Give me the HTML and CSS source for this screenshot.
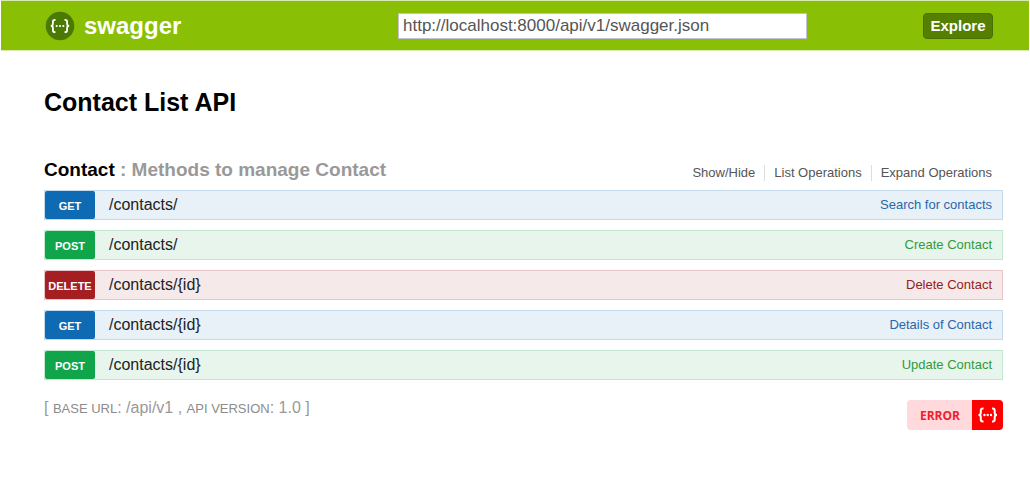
FILE: index.html
```html
<!DOCTYPE html>
<html lang="en">
<head>
<meta charset="utf-8">
<title>Swagger UI</title>
<link rel="stylesheet" href="styles.css">
</head>
<body>
<header class="header">
  <a class="logo" href="#">
    <svg class="logo-mark" viewBox="0 0 30 30" aria-hidden="true">
      <circle cx="15" cy="15" r="14.3" fill="#4b7a04"/>
      <g fill="none" stroke="#fff" stroke-width="1.8">
        <path d="M10.500 8.800h-.7c-1.400 0-1.900.6-1.900 1.900v2.100c0 1.300-.6 2.100-2.100 2.100 1.500 0 2.100.8 2.100 2.100v2.200c0 1.300.5 1.900 1.900 1.900h.7"/>
        <path d="M19.500 8.800h.7c1.400 0 1.900.6 1.900 1.900v2.100c0 1.300.6 2.100 2.100 2.100-1.500 0-2.100.8-2.100 2.100v2.200c0 1.300-.5 1.900-1.900 1.900h-.7"/>
      </g>
      <g fill="#fff"><circle cx="11.700" cy="15" r="1.100"/><circle cx="15" cy="15" r="1.100"/><circle cx="18.300" cy="15" r="1.100"/></g>
    </svg>
    <span>swagger</span>
  </a>
  <form class="explore-form">
    <input class="url" type="text" aria-label="Specification URL" value="http://localhost:8000/api/v1/swagger.json">
    <button class="explore" type="button">Explore</button>
  </form>
</header>
<main class="content">
  <h1 class="title">Contact List API</h1>
  <section>
    <div class="resource-head">
      <h2 class="resource"><a href="#">Contact</a> : Methods to manage Contact</h2>
      <ul class="options">
        <li><a href="#">Show/Hide</a></li>
        <li><a href="#">List Operations</a></li>
        <li><a href="#">Expand Operations</a></li>
      </ul>
    </div>
    <ul class="operations">
      <li class="operation get"><a class="method" href="#">GET</a><a class="path" href="#">/contacts/</a><a class="summary" href="#">Search for contacts</a></li>
      <li class="operation post"><a class="method" href="#">POST</a><a class="path" href="#">/contacts/</a><a class="summary" href="#">Create Contact</a></li>
      <li class="operation delete"><a class="method" href="#">DELETE</a><a class="path" href="#">/contacts/{id}</a><a class="summary" href="#">Delete Contact</a></li>
      <li class="operation get"><a class="method" href="#">GET</a><a class="path" href="#">/contacts/{id}</a><a class="summary" href="#">Details of Contact</a></li>
      <li class="operation post"><a class="method" href="#">POST</a><a class="path" href="#">/contacts/{id}</a><a class="summary" href="#">Update Contact</a></li>
    </ul>
  </section>
  <footer class="footer">
    <p class="info">[ <span class="key">BASE URL</span>: /api/v1 , <span class="key">API VERSION</span>: 1.0 ]</p>
    <a class="validator" href="#">
      <span class="validator-text">ERROR</span>
      <svg class="validator-mark" viewBox="0 0 31 30" aria-hidden="true">
        <g fill="none" stroke="#fff" stroke-width="2">
          <path d="M11.500 8.500h-.7c-1.500 0-2 .7-2 2v2.200c0 1.400-.6 2.200-2.300 2.200 1.700 0 2.300.8 2.300 2.200v2.300c0 1.300.5 2 2 2h.7"/>
          <path d="M20 8.500h.7c1.500 0 2 .7 2 2v2.200c0 1.400.6 2.200 2.300 2.200-1.700 0-2.300.8-2.300 2.200v2.300c0 1.300-.5 2-2 2h-.7"/>
        </g>
        <g fill="#fff"><circle cx="12.400" cy="15" r="1.200"/><circle cx="15.700" cy="15" r="1.200"/><circle cx="19" cy="15" r="1.200"/></g>
      </svg>
    </a>
  </footer>
</main>
</body>
</html>
```
FILE: styles.css
```css
* {
  box-sizing: border-box;
}

body {
  margin: 0;
  background: #fff;
  font-family: "Liberation Sans", Arial, sans-serif;
  color: #000;
}

a {
  color: inherit;
  text-decoration: none;
}

h1, h2, p, ul {
  margin: 0;
  padding: 0;
}

ul {
  list-style: none;
}

.header {
  display: flex;
  justify-content: space-between;
  align-items: center;
  height: 51px;
  margin: 0 1px;
  padding: 0 36px 0 44px;
  background: #89bf04;
  border-top: 1px solid #d8eaae;
  border-bottom: 1px solid #d8eaae;
}

.logo {
  display: flex;
  align-items: center;
  gap: 9px;
  color: #fff;
  font-size: 24px;
  font-weight: bold;
  line-height: 28px;
}

.logo-mark {
  width: 30px;
  height: 30px;
}

.explore-form {
  display: flex;
  align-items: center;
  gap: 116px;
}

.url {
  width: 409px;
  height: 26px;
  padding: 0 4px;
  border: 1px solid #c4c0d0;
  border-radius: 0;
  background: #fff;
  color: #555;
  font: 17px "Liberation Sans", Arial, sans-serif;
}

.explore {
  width: 70px;
  height: 26px;
  padding: 0;
  border: 1px solid #497004;
  border-radius: 4px;
  background: #547f00;
  color: #fff;
  font: bold 15px "Liberation Sans", Arial, sans-serif;
}

.content {
  padding: 36px 27px 0 44px;
}

.title {
  font-size: 25px;
  line-height: 30px;
}

.resource-head {
  display: flex;
  justify-content: space-between;
  align-items: flex-end;
  margin-top: 41px;
  padding-right: 11px;
}

.resource {
  padding-bottom: 8px;
  color: #999;
  font-size: 19px;
  line-height: 24px;
}

.resource a {
  color: #000;
}

.options {
  display: flex;
  padding-bottom: 9px;
  color: #555;
  font-size: 13px;
  line-height: 16px;
}

.options li + li {
  margin-left: 9px;
  padding-left: 9px;
  border-left: 1px solid #ddd;
}

.operations {
  display: grid;
  gap: 10px;
}

.operation {
  display: flex;
  align-items: center;
  height: 30px;
  padding-right: 10px;
  border: 1px solid;
}

.method {
  width: 50px;
  height: 28px;
  padding-top: 1px;
  border-radius: 2px;
  color: #fff;
  font-size: 11px;
  font-weight: bold;
  line-height: 28px;
  text-align: center;
}

.path {
  flex: 1;
  padding-left: 14px;
  font-size: 16px;
  line-height: 20px;
}

.summary {
  font-size: 13px;
  line-height: 16px;
}

.get {
  background: #e7f1f7;
  border-color: #c3d9ec;
  color: #2a66ad;
}

.get .method {
  background: #0f6ab4;
}

.post {
  background: #e7f5ec;
  border-color: #c3e8d1;
  color: #309a40;
}

.post .method {
  background: #10a54a;
}

.delete {
  background: #f6e9e9;
  border-color: #e8c6c7;
  color: #952020;
}

.delete .method {
  background: #a41e22;
}

.operation .path {
  color: #222;
}

.footer {
  display: flex;
  justify-content: space-between;
  align-items: flex-start;
  margin-top: 20px;
}

.info {
  color: #999;
  font-size: 16px;
  line-height: 16px;
}

.key {
  color: #8c8c8c;
  font-size: 13px;
}

.validator {
  display: flex;
  height: 30px;
  overflow: hidden;
  border-radius: 4px;
  background: #ffd9dc;
}

.validator-text {
  padding: 0 12px 0 13px;
  color: #f0202c;
  font: bold 12px/31px "Open Sans", sans-serif;
}

.validator-mark {
  width: 31px;
  height: 30px;
  background: #f00;
}
```
